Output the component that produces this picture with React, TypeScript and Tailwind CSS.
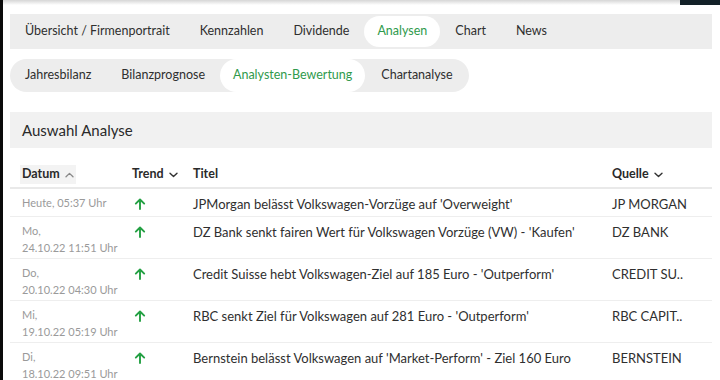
import React from "react";

const Up = () => (
  <svg width="12" height="12" viewBox="0 0 12 12" fill="none" className="text-[#23a043]">
    <path d="M6 11V1.8M1.8 5.6 6 1.5l4.2 4.1" stroke="currentColor" strokeWidth="1.9" strokeLinecap="round" strokeLinejoin="round" />
  </svg>
);

const ChevDown = ({ c = "#333" }: { c?: string }) => (
  <svg width="9" height="6" viewBox="0 0 9 6" fill="none">
    <path d="M1 1.2 4.5 4.6 8 1.2" stroke={c} strokeWidth="1.4" strokeLinecap="round" strokeLinejoin="round" />
  </svg>
);
const ChevUp = ({ c = "#888" }: { c?: string }) => (
  <svg width="9" height="6" viewBox="0 0 9 6" fill="none">
    <path d="M1 4.8 4.5 1.4 8 4.8" stroke={c} strokeWidth="1.3" strokeLinecap="round" strokeLinejoin="round" />
  </svg>
);

const rows = [
  { d1: "Heute, 05:37 Uhr", d2: "", t: "JPMorgan belässt Volkswagen-Vorzüge auf 'Overweight'", q: "JP MORGAN" },
  { d1: "Mo,", d2: "24.10.22 11:51 Uhr", t: "DZ Bank senkt fairen Wert für Volkswagen Vorzüge (VW) - 'Kaufen'", q: "DZ BANK" },
  { d1: "Do,", d2: "20.10.22 04:30 Uhr", t: "Credit Suisse hebt Volkswagen-Ziel auf 185 Euro - 'Outperform'", q: "CREDIT SU.." },
  { d1: "Mi,", d2: "19.10.22 05:19 Uhr", t: "RBC senkt Ziel für Volkswagen auf 281 Euro - 'Outperform'", q: "RBC CAPIT.." },
  { d1: "Di,", d2: "18.10.22 09:51 Uhr", t: "Bernstein belässt Volkswagen auf 'Market-Perform' - Ziel 160 Euro", q: "BERNSTEIN" },
];

export default function App() {
  return (
    <div className="w-[720px] h-[380px] bg-white flex overflow-hidden text-[#2f2f2f] font-['Lato',sans-serif]">
      <div className="w-[3px] shrink-0 bg-[#0b0b0b]" />
      <div className="flex-1 flex flex-col">
        <div className="flex h-[5px] shrink-0">
          <div className="flex-1 bg-gradient-to-b from-[#d6d6d6] to-white" />
          <div className="w-[40px] bg-[#132128]" />
        </div>
        <div className="pl-[7px] pr-[8px] flex flex-col">
          <nav className="mt-[9px] h-[35px] bg-[#ededed] flex items-center text-[12.5px]">
            <span className="px-[15px]">Übersicht / Firmenportrait</span>
            <span className="px-[15px]">Kennzahlen</span>
            <span className="px-[15px]">Dividende</span>
            <span className="px-[13px] h-[31px] flex items-center bg-white rounded-full text-[#2f9a4c]">Analysen</span>
            <span className="px-[15px]">Chart</span>
            <span className="px-[15px]">News</span>
          </nav>
          <div className="mt-[10px] self-start h-[33px] bg-[#ededed] rounded-full flex items-center text-[12.5px]">
            <span className="px-[15px]">Jahresbilanz</span>
            <span className="px-[15px]">Bilanzprognose</span>
            <span className="px-[13px] h-[33px] flex items-center bg-white rounded-full text-[#2f9a4c]">Analysten-Bewertung</span>
            <span className="px-[16px]">Chartanalyse</span>
          </div>
          <div className="mt-[20px] h-[36px] bg-[#f1f1f1] flex items-center pl-[12px] text-[15px] text-[#2a2a2a]">
            Auswahl Analyse
          </div>
          <div className="mt-[14px] h-[27px] flex items-center border-b-2 border-[#e9e9e9] text-[12.5px] font-bold text-[#2a2a2a]">
            <div className="w-[122px] pl-[10px]">
              <span className="inline-flex items-center gap-[5px] bg-[#f3f3f3] px-[2px] h-[19px]">
                Datum <ChevUp />
              </span>
            </div>
            <div className="w-[61px] flex items-center gap-[5px]">
              Trend <ChevDown />
            </div>
            <div className="w-[419px]">Titel</div>
            <div className="flex items-center gap-[5px]">
              Quelle <ChevDown />
            </div>
          </div>
          {rows.map((r, i) => (
            <div key={i} className="flex pt-[5px] pb-[2px] border-b border-[#eeeeee] text-[13px]">
              <div className="w-[122px] pl-[12px] text-[11px] leading-[17px] text-[#9a9a9a]">
                <div>{r.d1}</div>
                {r.d2 && <div>{r.d2}</div>}
              </div>
              <div className="w-[61px] pl-[2px] h-[20px] flex items-center">
                <Up />
              </div>
              <div className="w-[419px] leading-[20px]">{r.t}</div>
              <div className="leading-[20px]">{r.q}</div>
            </div>
          ))}
        </div>
      </div>
    </div>
  );
}
